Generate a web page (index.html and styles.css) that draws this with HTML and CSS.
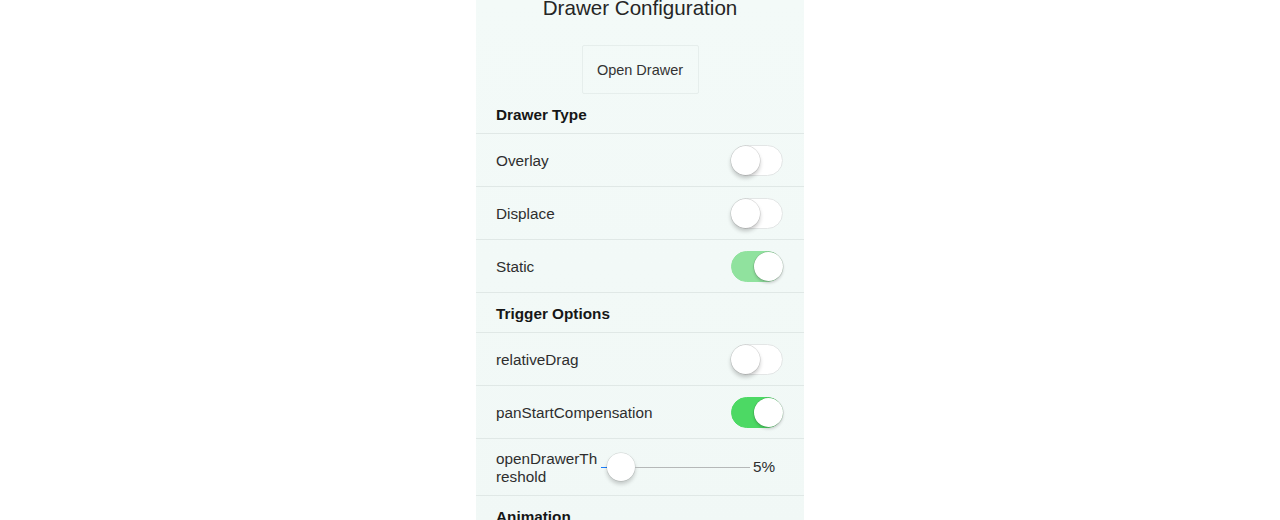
FILE: index.html
```html
<!DOCTYPE html>
<html>
<head>
<meta charset="utf-8">
<link rel="stylesheet" href="styles.css">
</head>
<body>
<div class="panel">
  <div class="title">Drawer Configuration</div>
  <div class="btn-wrap"><div class="btn">Open Drawer</div></div>
  <div class="heading">Drawer Type</div>
  <div class="row"><span class="label">Overlay</span><span class="switch"><span class="knob"></span></span></div>
  <div class="row"><span class="label">Displace</span><span class="switch"><span class="knob"></span></span></div>
  <div class="row"><span class="label">Static</span><span class="switch on faded"><span class="knob"></span></span></div>
  <div class="heading">Trigger Options</div>
  <div class="row"><span class="label">relativeDrag</span><span class="switch"><span class="knob"></span></span></div>
  <div class="row"><span class="label">panStartCompensation</span><span class="switch on"><span class="knob"></span></span></div>
  <div class="row slider-row">
    <span class="label wrap">openDrawerThreshold</span>
    <span class="slider">
      <span class="fill" style="width:6px"></span>
      <span class="thumb"></span>
      <span class="rest"></span>
    </span>
    <span class="value">5%</span>
  </div>
  <div class="heading">Animation</div>
</div>
</body>
</html>
```
FILE: styles.css
```css
html, body {
  margin: 0;
  padding: 0;
  background: #ffffff;
  height: 520px;
  overflow: hidden;
}
.panel {
  width: 328px;
  margin: 0 auto;
  min-height: 520px;
  background: linear-gradient(#f3faf8, #f1f8f6);
  font-family: "Helvetica Neue", "Liberation Sans", Arial, sans-serif;
  font-size: 15.3px;
  color: #2e2e2e;
}
.title {
  font-size: 20.6px;
  line-height: 16px;
  text-align: center;
  color: #262626;
}
.btn-wrap {
  display: flex;
  justify-content: center;
  margin-top: 29px;
}
.btn {
  width: 117px;
  height: 49px;
  box-sizing: border-box;
  border: 1px solid #e6eeec;
  border-radius: 2px;
  display: flex;
  align-items: center;
  justify-content: center;
  font-size: 14.5px;
  color: #333;
}
.heading {
  height: 37px;
  padding: 2px 20px 0 20px;
  display: flex;
  align-items: center;
  font-weight: bold;
  color: #161616;
  border-bottom: 1px solid #e0e8e6;
}
.row {
  height: 52px;
  padding: 0 21px 0 20px;
  display: flex;
  align-items: center;
  justify-content: space-between;
  border-bottom: 1px solid #e0e8e6;
}
.label {
  color: #2e2e2e;
  padding-top: 2px;
}
.switch {
  width: 52px;
  height: 31px;
  box-sizing: border-box;
  border-radius: 16px;
  border: 1.5px solid #e3e6e6;
  background: #ffffff;
  display: flex;
  align-items: center;
  justify-content: flex-start;
}
.switch .knob {
  width: 29px;
  height: 29px;
  margin-left: -1px;
  border-radius: 50%;
  background: #ffffff;
  box-shadow: 0 0 0 0.5px rgba(0,0,0,0.16), 0 3px 4px rgba(0,0,0,0.22);
}
.switch.on {
  background: #4cd964;
  border-color: #4cd964;
  justify-content: flex-end;
}
.switch.on .knob {
  margin-left: 0;
  margin-right: -1px;
  box-shadow: 0 0 0 0.5px rgba(0,0,0,0.18), 0 2px 3px rgba(0,0,0,0.18);
}
.switch.on.faded {
  background: #90e29e;
  border-color: #90e29e;
}
.slider-row {
  height: 36px;
  padding-top: 10px;
  padding-bottom: 10px;
  justify-content: flex-start;
}
.wrap {
  width: 104px;
  line-height: 18px;
  word-break: break-all;
}
.slider {
  width: 149px;
  margin-left: 1px;
  height: 30px;
  display: flex;
  align-items: center;
}
.slider .fill {
  height: 1px;
  background: #1a7cf9;
}
.slider .thumb {
  width: 28px;
  height: 28px;
  flex: none;
  border-radius: 50%;
  background: #ffffff;
  box-shadow: 0 0 0 0.5px rgba(0,0,0,0.14), 0 3px 4px rgba(0,0,0,0.2);
}
.slider .rest {
  flex: 1;
  height: 1px;
  background: #b5b8b8;
}
.value {
  margin-left: 3px;
  width: 30px;
}
```
